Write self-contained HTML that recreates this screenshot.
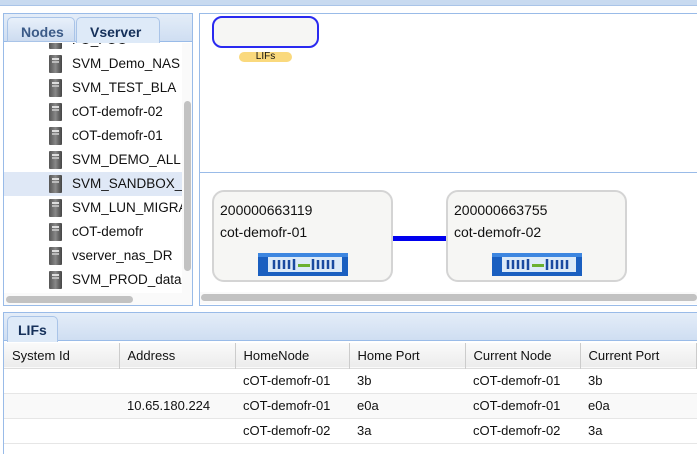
<!DOCTYPE html>
<html><head><style>
*{box-sizing:border-box;margin:0;padding:0}
body{width:697px;height:454px;overflow:hidden;background:#fff;font-family:"Liberation Sans",Verdana,sans-serif;font-size:13px;color:#111;position:relative}
.abs{position:absolute}
.row{position:absolute;left:0;width:178px;height:24px}
.row .ic{position:absolute;left:45px;top:3px;width:13px;height:18px;background:linear-gradient(90deg,#555,#888 50%,#444);border-radius:1px}
.row .ic:after{content:"";position:absolute;left:3px;top:3px;width:7px;height:2px;background:#ddd;box-shadow:0 3px 0 #bbb}
.row span{position:absolute;left:68px;top:4px;white-space:nowrap;font-size:13.5px}
.node{position:absolute;width:181px;height:92px;border:2px solid #d4d4d4;border-radius:12px;background:#f6f6f4}
.node div{position:absolute;left:6px;font-size:14px}
th,td{font-weight:normal;text-align:left;padding-left:8px;height:25px}
</style></head><body>
<div class="abs" style="left:0;top:0;width:697px;height:6px;background:#c8daf0;border-bottom:1px solid #a9c4e8"></div>
<!-- left panel -->
<div class="abs" style="left:3px;top:13px;width:190px;height:293px;border:1px solid #99bbe8;overflow:hidden">
 <div class="abs" style="left:0;top:0;width:190px;height:28px;background:linear-gradient(#e4edf8,#cfdef2);border-bottom:1px solid #99bbe8"></div>
 <div class="abs" style="left:3px;top:3px;width:68px;height:25px;border:1px solid #a9c4e8;border-radius:5px 5px 0 0;background:linear-gradient(#e8f0fa,#cddcf0);font-weight:bold;color:#3b5a87;font-size:14px;padding:6px 0 0 13px">Nodes</div>
 <div class="abs" style="left:72px;top:3px;width:84px;height:26px;border:1px solid #a9c4e8;border-bottom:none;border-radius:5px 5px 0 0;background:#deeaf8;font-weight:bold;color:#15305a;font-size:14px;padding:6px 0 0 13px">Vserver</div>
 <div class="abs" style="left:0;top:29px;width:178px;height:253px;overflow:hidden">
  <div class="row" style="top:-15px"><div class="ic"></div><span>FO_FOO</span></div>
  <div class="row" style="top:9px"><div class="ic"></div><span>SVM_Demo_NAS</span></div>
  <div class="row" style="top:33px"><div class="ic"></div><span>SVM_TEST_BLA</span></div>
  <div class="row" style="top:57px"><div class="ic"></div><span>cOT-demofr-02</span></div>
  <div class="row" style="top:81px"><div class="ic"></div><span>cOT-demofr-01</span></div>
  <div class="row" style="top:105px"><div class="ic"></div><span>SVM_DEMO_ALL</span></div>
  <div class="row" style="top:129px;background:#dfe8f6"><div class="ic"></div><span>SVM_SANDBOX_datastore</span></div>
  <div class="row" style="top:153px"><div class="ic"></div><span>SVM_LUN_MIGRATION</span></div>
  <div class="row" style="top:177px"><div class="ic"></div><span>cOT-demofr</span></div>
  <div class="row" style="top:201px"><div class="ic"></div><span>vserver_nas_DR</span></div>
  <div class="row" style="top:225px"><div class="ic"></div><span>SVM_PROD_datastore</span></div>
 </div>
 <div class="abs" style="left:178px;top:29px;width:12px;height:253px;background:#fafafa"></div>
 <div class="abs" style="left:180px;top:87px;width:7px;height:170px;background:#c2c2c2;border-radius:4px"></div>
 <div class="abs" style="left:0;top:279px;width:190px;height:14px;background:#fafafa"></div>
 <div class="abs" style="left:2px;top:282px;width:127px;height:7px;background:#c2c2c2;border-radius:4px"></div>
</div>
<!-- right top -->
<div class="abs" style="left:199px;top:13px;width:498px;height:160px;border:1px solid #99bbe8;border-right:none;border-bottom:1px solid #99bbe8"></div>
<div class="abs" style="left:212px;top:16px;width:107px;height:32px;border:2px solid #2a2af0;border-radius:10px;background:#f6f6f4"></div>
<div class="abs" style="left:239px;top:52px;width:53px;height:10px;border-radius:5px;background:#fad97d;font-size:10px;text-align:center;line-height:10px">LIFs</div>
<!-- right bottom -->
<div class="abs" style="left:199px;top:172px;width:498px;height:134px;border-left:1px solid #99bbe8;border-bottom:1px solid #99bbe8"></div>
<div class="node" style="left:212px;top:190px"><div style="top:10px">200000663119</div><div style="top:32px">cot-demofr-01</div></div>
<div class="node" style="left:446px;top:190px"><div style="top:10px">200000663755</div><div style="top:32px">cot-demofr-02</div></div>
<div class="abs" style="left:393px;top:236px;width:53px;height:5px;background:#0000ee"></div>
<svg class="abs" style="left:258px;top:253px" width="90" height="23" viewBox="0 0 90 23"><rect x="0" y="0" width="90" height="23" fill="#1a5fc0"/><rect x="0" y="0" width="90" height="4" fill="#3d86e0"/><rect x="10" y="4" width="74" height="15" fill="#dceaf8"/><g stroke="#1a4aa0" stroke-width="2.5" fill="none"><path d="M16 7v9M21 7v9M26 7v9M31 7v9M36 6v11M55 6v11M60 7v9M65 7v9M70 7v9M75 7v9"/></g><rect x="40" y="11" width="12" height="3" fill="#6ab030"/></svg>
<svg class="abs" style="left:492px;top:253px" width="90" height="23" viewBox="0 0 90 23"><rect x="0" y="0" width="90" height="23" fill="#1a5fc0"/><rect x="0" y="0" width="90" height="4" fill="#3d86e0"/><rect x="10" y="4" width="74" height="15" fill="#dceaf8"/><g stroke="#1a4aa0" stroke-width="2.5" fill="none"><path d="M16 7v9M21 7v9M26 7v9M31 7v9M36 6v11M55 6v11M60 7v9M65 7v9M70 7v9M75 7v9"/></g><rect x="40" y="11" width="12" height="3" fill="#6ab030"/></svg>
<div class="abs" style="left:200px;top:292px;width:497px;height:12px;background:#fafafa"></div>
<div class="abs" style="left:201px;top:294px;width:496px;height:7px;background:#c2c2c2;border-radius:4px"></div>
<!-- bottom -->
<div class="abs" style="left:3px;top:312px;width:694px;height:142px;border:1px solid #99bbe8;border-right:none;border-bottom:none"></div>
<div class="abs" style="left:4px;top:313px;width:693px;height:28px;background:linear-gradient(#e4edf8,#cfdef2);border-bottom:1px solid #99bbe8"></div>
<div class="abs" style="left:7px;top:316px;width:51px;height:26px;border:1px solid #a9c4e8;border-bottom:none;border-radius:5px 5px 0 0;background:#deeaf8;font-weight:bold;color:#15305a;font-size:14px;padding:5px 0 0 10px">LIFs</div>
<table class="abs" style="left:4px;top:343px;border-collapse:collapse;width:693px;font-size:13px">
<tr style="background:linear-gradient(#fafafa,#ececec);border-bottom:1px solid #ddd"><th style="width:115px;border-right:1px solid #ccc">System Id</th><th style="width:116px;border-right:1px solid #ccc">Address</th><th style="width:114px;border-right:1px solid #ccc">HomeNode</th><th style="width:116px;border-right:1px solid #ccc">Home Port</th><th style="width:115px;border-right:1px solid #ccc">Current Node</th><th style="border-right:1px solid #ccc">Current Port</th></tr>
<tr style="border-bottom:1px solid #e6e6e6"><td></td><td></td><td>cOT-demofr-01</td><td>3b</td><td>cOT-demofr-01</td><td>3b</td></tr>
<tr style="border-bottom:1px solid #e6e6e6;background:#f9f9f9"><td></td><td>10.65.180.224</td><td>cOT-demofr-01</td><td>e0a</td><td>cOT-demofr-01</td><td>e0a</td></tr>
<tr style="border-bottom:1px solid #e6e6e6"><td></td><td></td><td>cOT-demofr-02</td><td>3a</td><td>cOT-demofr-02</td><td>3a</td></tr>
</table>
</body></html>
